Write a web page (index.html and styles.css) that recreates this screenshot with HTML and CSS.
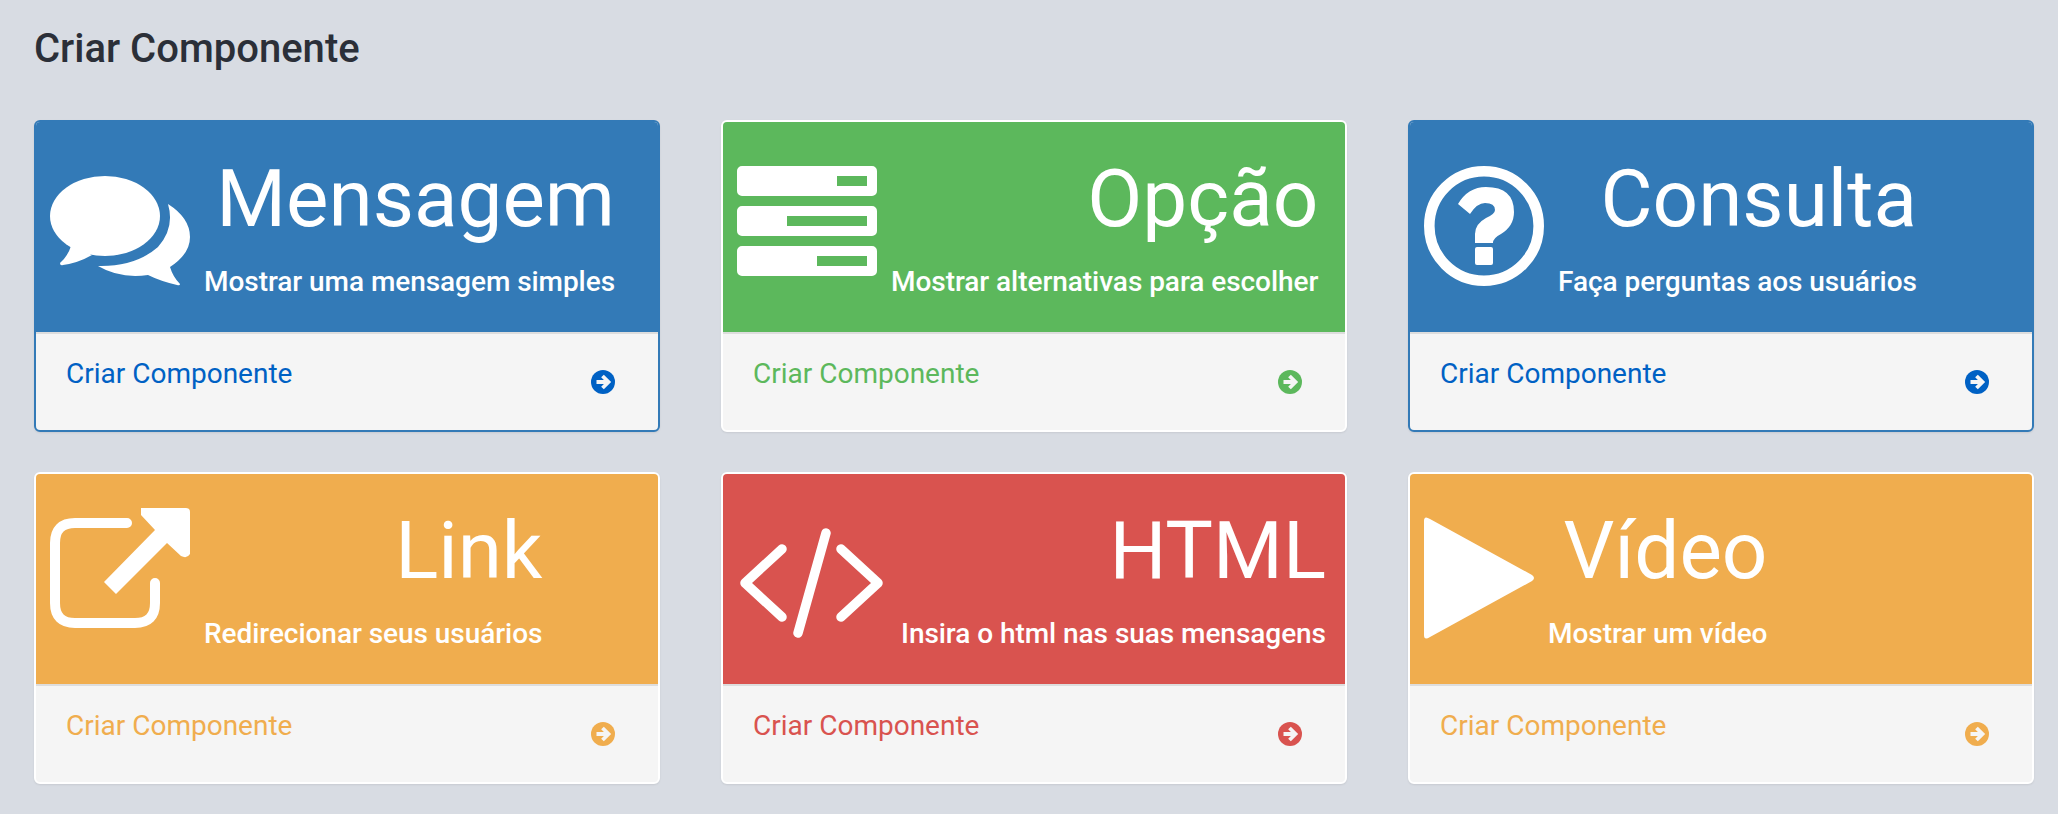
FILE: index.html
```html
<!DOCTYPE html>
<html lang="pt">
<head>
<meta charset="utf-8">
<title>Criar Componente</title>
<link rel="stylesheet" href="styles.css">
</head>
<body>
<h1 class="title">Criar Componente</h1>
<main class="grid">
  <section class="card blue outlined">
    <div class="head">
      <svg class="icon w140" viewBox="0 0 140 140" aria-hidden="true"><ellipse cx="55" cy="66" rx="55" ry="40"/><path d="M21 96Q18 106 10 113Q10 116 13 115Q28 113 42 105Z"/><path d="M118 54Q140 68 140 87Q140 104 120 117Q123 127 130 134Q130 136 127 135Q110 131 98 125Q70 129 48 116Q85 117 108 97Q125 78 118 54Z"/></svg>
      <div class="text"><h2>Mensagem</h2><p>Mostrar uma mensagem simples</p></div>
    </div>
    <a class="foot" href="#"><span>Criar Componente</span><svg class="arrow" viewBox="0 0 24 24" aria-hidden="true"><circle cx="12" cy="12" r="12"/><path d="M5.500 12h11.500M11.500 6l6 6-6 6"/></svg></a>
  </section>
  <section class="card green">
    <div class="head">
      <svg class="icon w140" viewBox="0 0 140 140" aria-hidden="true"><path fill-rule="evenodd" d="M5 16h130a5 5 0 0 1 5 5v20a5 5 0 0 1-5 5H5a5 5 0 0 1-5-5V21a5 5 0 0 1 5-5zM100 26v10h30V26zM5 56h130a5 5 0 0 1 5 5v20a5 5 0 0 1-5 5H5a5 5 0 0 1-5-5V61a5 5 0 0 1 5-5zM50 66v10h80V66zM5 96h130a5 5 0 0 1 5 5v20a5 5 0 0 1-5 5H5a5 5 0 0 1-5-5v-20a5 5 0 0 1 5-5zM80 106v10h50v-10z"/></svg>
      <div class="text"><h2>Opção</h2><p>Mostrar alternativas para escolher</p></div>
    </div>
    <a class="foot" href="#"><span>Criar Componente</span><svg class="arrow" viewBox="0 0 24 24" aria-hidden="true"><circle cx="12" cy="12" r="12"/><path d="M5.500 12h11.500M11.500 6l6 6-6 6"/></svg></a>
  </section>
  <section class="card blue outlined">
    <div class="head">
      <svg class="icon w120" viewBox="0 0 120 140" aria-hidden="true"><circle class="ring" cx="60" cy="76" r="54.700"/><path d="M34 54Q44 37 62 37Q90 37 90 62Q90 76 77 84Q69 88 69 93H51V84Q51 74 62 68Q71 64 71 60Q71 53 61 53Q53 53 46 64Z"/><rect x="51" y="97" width="18" height="18" rx="2"/></svg>
      <div class="text"><h2>Consulta</h2><p>Faça perguntas aos usuários</p></div>
    </div>
    <a class="foot" href="#"><span>Criar Componente</span><svg class="arrow" viewBox="0 0 24 24" aria-hidden="true"><circle cx="12" cy="12" r="12"/><path d="M5.500 12h11.500M11.500 6l6 6-6 6"/></svg></a>
  </section>
  <section class="card orange">
    <div class="head">
      <svg class="icon w140" viewBox="0 0 140 140" aria-hidden="true"><path class="line" d="M77 21H25Q5 21 5 41V101Q5 121 25 121H85Q105 121 105 101V81"/><path d="M91 6H136a4 4 0 0 1 4 4V52Q137 57 131 54L117 41L66 92L54 80L105 28L91 13Z"/></svg>
      <div class="text"><h2>Link</h2><p>Redirecionar seus usuários</p></div>
    </div>
    <a class="foot" href="#"><span>Criar Componente</span><svg class="arrow" viewBox="0 0 24 24" aria-hidden="true"><circle cx="12" cy="12" r="12"/><path d="M5.500 12h11.500M11.500 6l6 6-6 6"/></svg></a>
  </section>
  <section class="card red">
    <div class="head">
      <svg class="icon w150" viewBox="0 0 150 140" aria-hidden="true"><path class="line thin" d="M45 47L8 81L45 115M104 47L141 81L104 115M89 31L61 131"/></svg>
      <div class="text"><h2>HTML</h2><p>Insira o html nas suas mensagens</p></div>
    </div>
    <a class="foot" href="#"><span>Criar Componente</span><svg class="arrow" viewBox="0 0 24 24" aria-hidden="true"><circle cx="12" cy="12" r="12"/><path d="M5.500 12h11.500M11.500 6l6 6-6 6"/></svg></a>
  </section>
  <section class="card orange">
    <div class="head">
      <svg class="icon w110" viewBox="0 0 110 140" aria-hidden="true"><path d="M0 19Q0 13 6 17L108 73Q112 76 108 79L6 135Q0 139 0 133Z"/></svg>
      <div class="text"><h2>Vídeo</h2><p>Mostrar um vídeo</p></div>
    </div>
    <a class="foot" href="#"><span>Criar Componente</span><svg class="arrow" viewBox="0 0 24 24" aria-hidden="true"><circle cx="12" cy="12" r="12"/><path d="M5.500 12h11.500M11.500 6l6 6-6 6"/></svg></a>
  </section>
</main>
</body>
</html>
```
FILE: styles.css
```css
* { box-sizing: border-box; }
html, body { height: 100%; }
body {
  margin: 0;
  padding: 0 24px 30px 34px;
  background: #d8dce3;
  font-family: Roboto, "Liberation Sans", sans-serif;
  color: #2b2f38;
  overflow: hidden;
}
.title {
  margin: 0;
  padding-top: 27px;
  height: 120px;
  font-size: 40px;
  line-height: 44px;
  font-weight: 500;
}
.grid {
  display: grid;
  grid-template-columns: repeat(3, 626px);
  column-gap: 61px;
  row-gap: 40px;
}
.card {
  --accent: #337ab7;
  --link: #337ab7;
  height: 312px;
  display: flex;
  flex-direction: column;
  border: 2px solid #fff;
  border-radius: 6px;
  overflow: hidden;
  background: #f5f5f5;
  box-shadow: 0 1px 2px rgba(0, 0, 0, .08);
}
.blue { --accent: #337ab7; --link: #0061c4; }
.green { --accent: #5cb85c; --link: #5cb85c; }
.orange { --accent: #f0ad4e; --link: #f0ad4e; }
.red { --accent: #d9534f; --link: #d9534f; }
.outlined { border-color: #337ab7; }
.head {
  flex: none;
  height: 182px;
  margin-top: -2px;
  border-top: 2px solid var(--accent);
  display: flex;
  align-items: flex-start;
  column-gap: 14px;
  padding: 28px 0 0 14px;
  background: var(--accent);
  color: #fff;
  box-sizing: content-box;
}
.icon { flex: none; height: 140px; fill: #fff; overflow: visible; }
.w140 { width: 140px; }
.w120 { width: 120px; }
.w150 { width: 150px; }
.w110 { width: 110px; }
.ring { fill: none; stroke: #fff; stroke-width: 10.600; }
.line { fill: none; stroke: #fff; stroke-width: 10; stroke-linecap: round; stroke-linejoin: round; }
.thin { stroke-width: 9.500; }
.text { text-align: right; margin-top: 1px; }
.text h2 {
  margin: 0;
  font-size: 80px;
  line-height: 96px;
  font-weight: 400;
  white-space: nowrap;
}
.text p {
  margin: 19px 0 0;
  font-size: 28px;
  line-height: 32px;
  font-weight: 490;
  letter-spacing: -.05px;
  white-space: nowrap;
}
.foot {
  flex: 1;
  display: flex;
  justify-content: space-between;
  align-items: flex-start;
  padding: 24px 43px 0 30px;
  border-top: 2px solid #ddd;
  color: var(--link);
  text-decoration: none;
  font-size: 28px;
  line-height: 32px;
  font-weight: 430;
}
.arrow { flex: none; width: 24px; height: 24px; margin-top: 12px; fill: var(--link); }
.arrow path { fill: none; stroke: #f5f5f5; stroke-width: 3.800; stroke-linejoin: miter; }
```
